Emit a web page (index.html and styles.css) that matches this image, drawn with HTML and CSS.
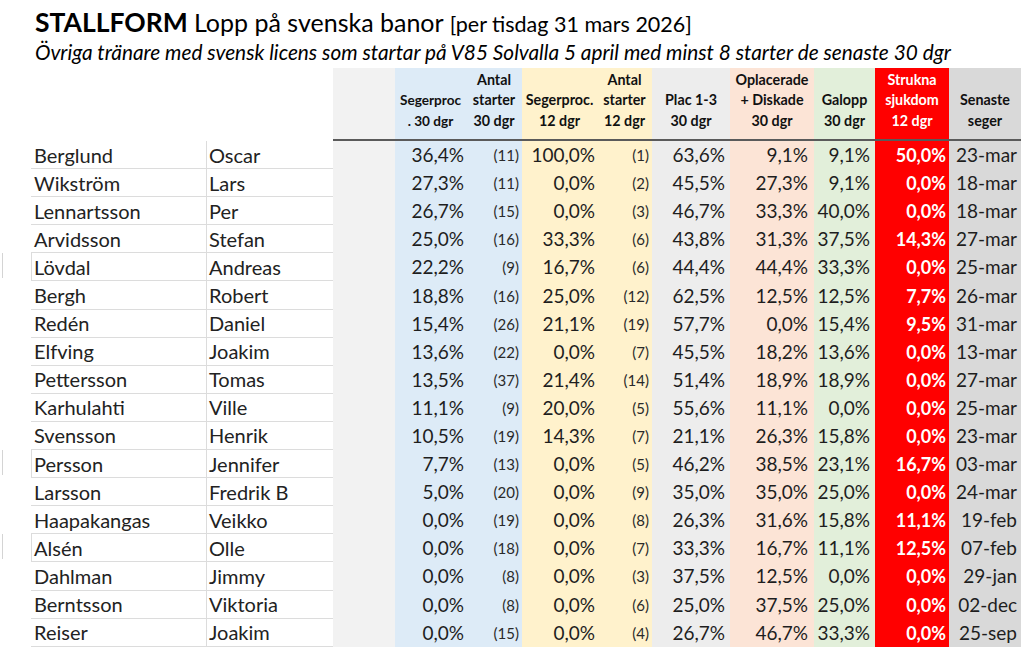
FILE: index.html
```html
<!DOCTYPE html>
<html lang="sv">
<head>
<meta charset="utf-8">
<title>Stallform</title>
<link rel="stylesheet" href="styles.css">
</head>
<body>
<div class="page">
  <div class="title"><span class="t-bold">STALLFORM</span> <span class="t-main">Lopp på svenska banor</span> <span class="t-date">[per tisdag 31 mars 2026]</span></div>
  <div class="subtitle">Övriga tränare med svensk licens som startar på V85 Solvalla 5 april med minst 8 starter de senaste 30 dgr</div>
  <table class="stats">
    <colgroup>
      <col class="w-ln"><col class="w-fn"><col class="w-sp"><col class="w-p30"><col class="w-a30"><col class="w-p12"><col class="w-a12"><col class="w-pl"><col class="w-op"><col class="w-ga"><col class="w-st"><col class="w-se">
    </colgroup>
    <thead>
      <tr class="head">
        <th class="blank"></th>
        <th class="blank"></th>
        <th class="c-sp"></th>
        <th class="c-blue small">Segerproc<br>. 30 dgr</th>
        <th class="c-blue">Antal<br>starter<br>30 dgr</th>
        <th class="c-yel">Segerproc.<br>12 dgr</th>
        <th class="c-yel">Antal<br>starter<br>12 dgr</th>
        <th class="c-gray">Plac 1-3<br>30 dgr</th>
        <th class="c-peach">Oplacerade<br>+ Diskade<br>30 dgr</th>
        <th class="c-green">Galopp<br>30 dgr</th>
        <th class="c-red">Strukna<br>sjukdom<br>12 dgr</th>
        <th class="c-sen">Senaste<br>seger</th>
      </tr>
    </thead>
    <tbody>
      <tr><td class="ln">Berglund</td><td class="fn">Oscar</td><td class="c-sp"></td><td class="c-blue pct">36,4%</td><td class="c-blue cnt">(11)</td><td class="c-yel pct">100,0%</td><td class="c-yel cnt">(1)</td><td class="c-gray pct">63,6%</td><td class="c-peach pct">9,1%</td><td class="c-green pct">9,1%</td><td class="c-red pct">50,0%</td><td class="c-sen date">23-mar</td></tr>
      <tr><td class="ln">Wikström</td><td class="fn">Lars</td><td class="c-sp"></td><td class="c-blue pct">27,3%</td><td class="c-blue cnt">(11)</td><td class="c-yel pct">0,0%</td><td class="c-yel cnt">(2)</td><td class="c-gray pct">45,5%</td><td class="c-peach pct">27,3%</td><td class="c-green pct">9,1%</td><td class="c-red pct">0,0%</td><td class="c-sen date">18-mar</td></tr>
      <tr><td class="ln">Lennartsson</td><td class="fn">Per</td><td class="c-sp"></td><td class="c-blue pct">26,7%</td><td class="c-blue cnt">(15)</td><td class="c-yel pct">0,0%</td><td class="c-yel cnt">(3)</td><td class="c-gray pct">46,7%</td><td class="c-peach pct">33,3%</td><td class="c-green pct">40,0%</td><td class="c-red pct">0,0%</td><td class="c-sen date">18-mar</td></tr>
      <tr><td class="ln">Arvidsson</td><td class="fn">Stefan</td><td class="c-sp"></td><td class="c-blue pct">25,0%</td><td class="c-blue cnt">(16)</td><td class="c-yel pct">33,3%</td><td class="c-yel cnt">(6)</td><td class="c-gray pct">43,8%</td><td class="c-peach pct">31,3%</td><td class="c-green pct">37,5%</td><td class="c-red pct">14,3%</td><td class="c-sen date">27-mar</td></tr>
      <tr><td class="ln marked">Lövdal</td><td class="fn">Andreas</td><td class="c-sp"></td><td class="c-blue pct">22,2%</td><td class="c-blue cnt">(9)</td><td class="c-yel pct">16,7%</td><td class="c-yel cnt">(6)</td><td class="c-gray pct">44,4%</td><td class="c-peach pct">44,4%</td><td class="c-green pct">33,3%</td><td class="c-red pct">0,0%</td><td class="c-sen date">25-mar</td></tr>
      <tr><td class="ln">Bergh</td><td class="fn">Robert</td><td class="c-sp"></td><td class="c-blue pct">18,8%</td><td class="c-blue cnt">(16)</td><td class="c-yel pct">25,0%</td><td class="c-yel cnt">(12)</td><td class="c-gray pct">62,5%</td><td class="c-peach pct">12,5%</td><td class="c-green pct">12,5%</td><td class="c-red pct">7,7%</td><td class="c-sen date">26-mar</td></tr>
      <tr><td class="ln">Redén</td><td class="fn">Daniel</td><td class="c-sp"></td><td class="c-blue pct">15,4%</td><td class="c-blue cnt">(26)</td><td class="c-yel pct">21,1%</td><td class="c-yel cnt">(19)</td><td class="c-gray pct">57,7%</td><td class="c-peach pct">0,0%</td><td class="c-green pct">15,4%</td><td class="c-red pct">9,5%</td><td class="c-sen date">31-mar</td></tr>
      <tr><td class="ln">Elfving</td><td class="fn">Joakim</td><td class="c-sp"></td><td class="c-blue pct">13,6%</td><td class="c-blue cnt">(22)</td><td class="c-yel pct">0,0%</td><td class="c-yel cnt">(7)</td><td class="c-gray pct">45,5%</td><td class="c-peach pct">18,2%</td><td class="c-green pct">13,6%</td><td class="c-red pct">0,0%</td><td class="c-sen date">13-mar</td></tr>
      <tr><td class="ln">Pettersson</td><td class="fn">Tomas</td><td class="c-sp"></td><td class="c-blue pct">13,5%</td><td class="c-blue cnt">(37)</td><td class="c-yel pct">21,4%</td><td class="c-yel cnt">(14)</td><td class="c-gray pct">51,4%</td><td class="c-peach pct">18,9%</td><td class="c-green pct">18,9%</td><td class="c-red pct">0,0%</td><td class="c-sen date">27-mar</td></tr>
      <tr><td class="ln">Karhulahti</td><td class="fn">Ville</td><td class="c-sp"></td><td class="c-blue pct">11,1%</td><td class="c-blue cnt">(9)</td><td class="c-yel pct">20,0%</td><td class="c-yel cnt">(5)</td><td class="c-gray pct">55,6%</td><td class="c-peach pct">11,1%</td><td class="c-green pct">0,0%</td><td class="c-red pct">0,0%</td><td class="c-sen date">25-mar</td></tr>
      <tr><td class="ln">Svensson</td><td class="fn">Henrik</td><td class="c-sp"></td><td class="c-blue pct">10,5%</td><td class="c-blue cnt">(19)</td><td class="c-yel pct">14,3%</td><td class="c-yel cnt">(7)</td><td class="c-gray pct">21,1%</td><td class="c-peach pct">26,3%</td><td class="c-green pct">15,8%</td><td class="c-red pct">0,0%</td><td class="c-sen date">23-mar</td></tr>
      <tr><td class="ln marked">Persson</td><td class="fn">Jennifer</td><td class="c-sp"></td><td class="c-blue pct">7,7%</td><td class="c-blue cnt">(13)</td><td class="c-yel pct">0,0%</td><td class="c-yel cnt">(5)</td><td class="c-gray pct">46,2%</td><td class="c-peach pct">38,5%</td><td class="c-green pct">23,1%</td><td class="c-red pct">16,7%</td><td class="c-sen date">03-mar</td></tr>
      <tr><td class="ln">Larsson</td><td class="fn">Fredrik B</td><td class="c-sp"></td><td class="c-blue pct">5,0%</td><td class="c-blue cnt">(20)</td><td class="c-yel pct">0,0%</td><td class="c-yel cnt">(9)</td><td class="c-gray pct">35,0%</td><td class="c-peach pct">35,0%</td><td class="c-green pct">25,0%</td><td class="c-red pct">0,0%</td><td class="c-sen date">24-mar</td></tr>
      <tr><td class="ln">Haapakangas</td><td class="fn">Veikko</td><td class="c-sp"></td><td class="c-blue pct">0,0%</td><td class="c-blue cnt">(19)</td><td class="c-yel pct">0,0%</td><td class="c-yel cnt">(8)</td><td class="c-gray pct">26,3%</td><td class="c-peach pct">31,6%</td><td class="c-green pct">15,8%</td><td class="c-red pct">11,1%</td><td class="c-sen date">19-feb</td></tr>
      <tr><td class="ln marked">Alsén</td><td class="fn">Olle</td><td class="c-sp"></td><td class="c-blue pct">0,0%</td><td class="c-blue cnt">(18)</td><td class="c-yel pct">0,0%</td><td class="c-yel cnt">(7)</td><td class="c-gray pct">33,3%</td><td class="c-peach pct">16,7%</td><td class="c-green pct">11,1%</td><td class="c-red pct">12,5%</td><td class="c-sen date">07-feb</td></tr>
      <tr><td class="ln">Dahlman</td><td class="fn">Jimmy</td><td class="c-sp"></td><td class="c-blue pct">0,0%</td><td class="c-blue cnt">(8)</td><td class="c-yel pct">0,0%</td><td class="c-yel cnt">(3)</td><td class="c-gray pct">37,5%</td><td class="c-peach pct">12,5%</td><td class="c-green pct">0,0%</td><td class="c-red pct">0,0%</td><td class="c-sen date">29-jan</td></tr>
      <tr><td class="ln">Berntsson</td><td class="fn">Viktoria</td><td class="c-sp"></td><td class="c-blue pct">0,0%</td><td class="c-blue cnt">(8)</td><td class="c-yel pct">0,0%</td><td class="c-yel cnt">(6)</td><td class="c-gray pct">25,0%</td><td class="c-peach pct">37,5%</td><td class="c-green pct">25,0%</td><td class="c-red pct">0,0%</td><td class="c-sen date">02-dec</td></tr>
      <tr><td class="ln">Reiser</td><td class="fn">Joakim</td><td class="c-sp"></td><td class="c-blue pct">0,0%</td><td class="c-blue cnt">(15)</td><td class="c-yel pct">0,0%</td><td class="c-yel cnt">(4)</td><td class="c-gray pct">26,7%</td><td class="c-peach pct">46,7%</td><td class="c-green pct">33,3%</td><td class="c-red pct">0,0%</td><td class="c-sen date">25-sep</td></tr>
    </tbody>
  </table>
</div>
</body>
</html>
```

FILE: styles.css
```css
html, body {
  margin: 0;
  padding: 0;
  background: #ffffff;
}

body {
  font-family: Lato, "Open Sans", "Liberation Sans", sans-serif;
  color: #1e1e1e;
  width: 1024px;
  height: 648px;
  overflow: hidden;
}

.page {
  padding-top: 8px;
}

.title {
  padding-left: 35px;
  line-height: 28px;
  height: 28px;
  white-space: nowrap;
  color: #000;
}

.t-bold {
  font-weight: 700;
  font-size: 26.5px;
}

.t-main {
  font-size: 25px;
  margin-left: 2px;
}

.t-date {
  font-size: 21.5px;
  margin-left: 2px;
}

.subtitle {
  padding-left: 35px;
  font-style: italic;
  font-size: 20.8px;
  line-height: 22px;
  height: 22px;
  white-space: nowrap;
  color: #000;
  margin-top: 5px;
}

.stats {
  margin-top: 5px;
  margin-left: 31px;
  border-collapse: separate;
  border-spacing: 0;
  table-layout: fixed;
  width: 990px;
}

.w-ln { width: 175px; }
.w-fn { width: 127px; }
.w-sp { width: 62px; }
.w-p30 { width: 71px; }
.w-a30 { width: 56px; }
.w-p12 { width: 75px; }
.w-a12 { width: 55px; }
.w-pl { width: 78px; }
.w-op { width: 84px; }
.w-ga { width: 61px; }
.w-st { width: 74px; }
.w-se { width: 72px; }

.head {
  height: 73px;
}

.head th {
  font-size: 14.3px;
  font-weight: 700;
  line-height: 20.5px;
  text-align: center;
  vertical-align: bottom;
  padding: 0 0 8px 0;
  color: #111;
  border-bottom: 2px solid #5a5a5a;
  white-space: nowrap;
}

.head th.small {
  font-size: 13.6px;
}

.head th.blank {
  border-bottom: none;
  background: #fff;
}

.head th.c-red {
  color: #fff;
}

tbody tr {
  height: 28.1px;
}

tbody td {
  padding: 0;
  font-size: 19px;
  line-height: 22px;
  vertical-align: middle;
  white-space: nowrap;
}

.ln, .fn {
  border-bottom: 1px solid #dcdcdc;
  padding-left: 3px;
  text-align: left;
  color: #222;
  font-size: 20px;
}

.fn {
  border-left: 1px solid #dcdcdc;
  padding-left: 2px;
}

.ln.marked {
  position: relative;
  border-left: 1px solid #dcdcdc;
  padding-left: 2px;
}

.ln.marked::before {
  content: "";
  position: absolute;
  left: -30px;
  top: 0;
  bottom: 2px;
  width: 1px;
  background: #d4d4d4;
}

.c-sp { background: #f2f2f2; }
.c-blue { background: #ddebf7; }
.c-yel { background: #fff2cc; }
.c-gray { background: #ededed; }
.c-peach { background: #fce4d6; }
.c-green { background: #e2efda; }
.c-red { background: #ff0000; }
.c-sen { background: #d9d9d9; }

.pct {
  text-align: right;
  padding-right: 2px;
}

.c-yel.pct { padding-right: 2px; }
.c-gray.pct { padding-right: 5px; }
.c-peach.pct { padding-right: 6px; }
.c-green.pct { padding-right: 5px; }

tbody td.c-red.pct {
  color: #fff;
  font-weight: 700;
  font-size: 18px;
  padding-right: 3px;
}

.cnt {
  text-align: right;
  font-size: 15px;
  padding-right: 3px;
  color: #2a2a2a;
}

tbody td.cnt {
  font-size: 15px;
}

.date {
  text-align: right;
  padding-right: 4px;
}
```
